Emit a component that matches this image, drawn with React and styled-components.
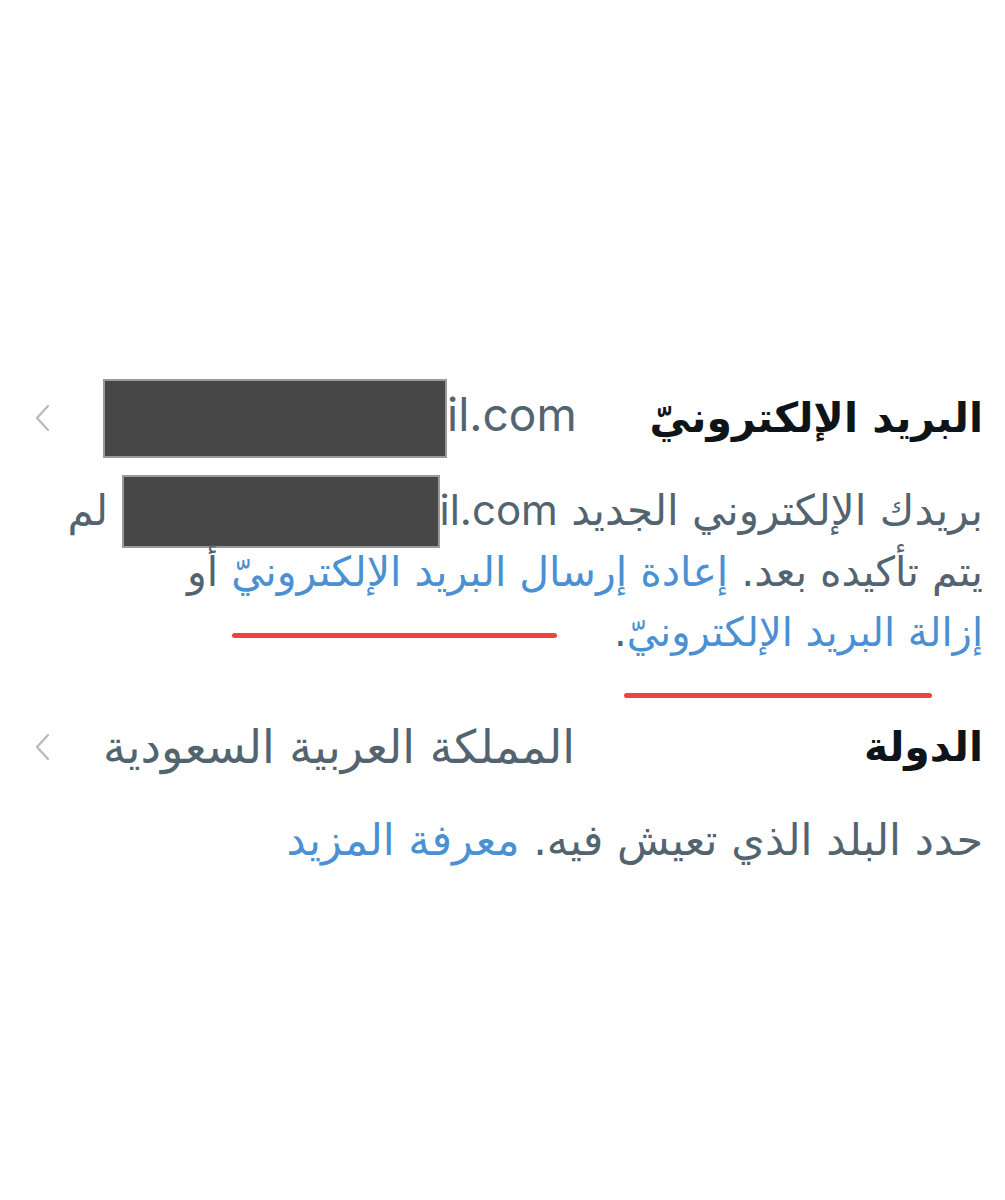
import React from 'react';
import styled, { createGlobalStyle } from 'styled-components';

const Global = createGlobalStyle`
  html, body {
    margin: 0;
    padding: 0;
    background: #ffffff;
  }
  body {
    font-family: "DejaVu Sans", "Noto Sans", sans-serif;
  }
`;

const Page = styled.div`
  direction: rtl;
  width: 1005px;
  height: 1200px;
  box-sizing: border-box;
  padding: 378px 22px 0 33px;
  background: #ffffff;
`;

const Row = styled.div`
  display: flex;
  align-items: center;
  height: 80px;
`;

const Title = styled.div`
  font-size: 41px;
  font-weight: 700;
  color: #0f1419;
  white-space: nowrap;
`;

const Value = styled.div`
  margin-right: auto;
  display: flex;
  align-items: center;
  font-size: ${p => p.$size || 44}px;
  color: #536471;
  white-space: nowrap;
`;

const Latin = styled.span`
  direction: ltr;
  unicode-bidi: isolate;
  font-family: "Inter", "Roboto", sans-serif;
  font-size: ${p => p.$size || 46}px;
`;

const Redact = styled.span`
  display: inline-block;
  vertical-align: middle;
  width: ${p => p.$w}px;
  height: ${p => p.$h}px;
  margin: ${p => p.$m || '0'};
  background: #474747;
  border: 2px solid #9a9a9a;
  box-sizing: border-box;
`;

const Chevron = styled.svg`
  width: 20px;
  height: 32px;
  margin-right: 50px;
  flex: none;
`;

const Block = styled.div`
  position: relative;
  margin-top: ${p => p.$top}px;
`;

const Text = styled.p`
  margin: 0;
  font-size: ${p => p.$size || 42}px;
  line-height: 60px;
  color: #536471;
  white-space: nowrap;
`;

const Line = styled.span`
  display: block;
  font-size: ${p => p.$size}px;
`;

const Link = styled.span`
  color: #4a90d2;
`;

const Mark = styled.div`
  position: absolute;
  height: 5px;
  border-radius: 3px;
  background: #f0433a;
  left: ${p => p.$x}px;
  top: ${p => p.$y}px;
  width: ${p => p.$w}px;
`;

function Arrow() {
  return (
    <Chevron viewBox="0 0 20 32">
      <polyline points="15,4 4,16 15,28" fill="none" stroke="#b3bac1" strokeWidth="2.2" strokeLinecap="round" strokeLinejoin="round" />
    </Chevron>
  );
}

export default function App() {
  return (
    <Page>
      <Global />
      <Row>
        <Title>البريد الإلكترونيّ</Title>
        <Value>
          <Latin>
            <Redact $w={344} $h={79} />il.com
          </Latin>
          <Arrow />
        </Value>
      </Row>

      <Block $top={22}>
        <Text>
          <Line $size={42}>
            بريدك الإلكتروني الجديد{' '}
            <Latin $size={42}>
              <Redact $w={318} $h={73} $m="-10px 0 -6px 0" />il.com
            </Latin>{' '}
            لم
          </Line>
          <Line $size={41}>
            يتم تأكيده بعد.{' '}
            <Link>إعادة إرسال البريد الإلكترونيّ</Link> أو
          </Line>
          <Line $size={40}>
            <Link>إزالة البريد الإلكترونيّ</Link>.
          </Line>
        </Text>
        <Mark $x={199} $y={153} $w={325} />
        <Mark $x={591} $y={213} $w={308} />
      </Block>

      <Block $top={45}>
        <Row>
          <Title>الدولة</Title>
          <Value $size={46}>
            المملكة العربية السعودية
            <Arrow />
          </Value>
        </Row>
      </Block>

      <Block $top={23}>
        <Text $size={43}>
          حدد البلد الذي تعيش فيه. <Link>معرفة المزيد</Link>
        </Text>
      </Block>
    </Page>
  );
}
